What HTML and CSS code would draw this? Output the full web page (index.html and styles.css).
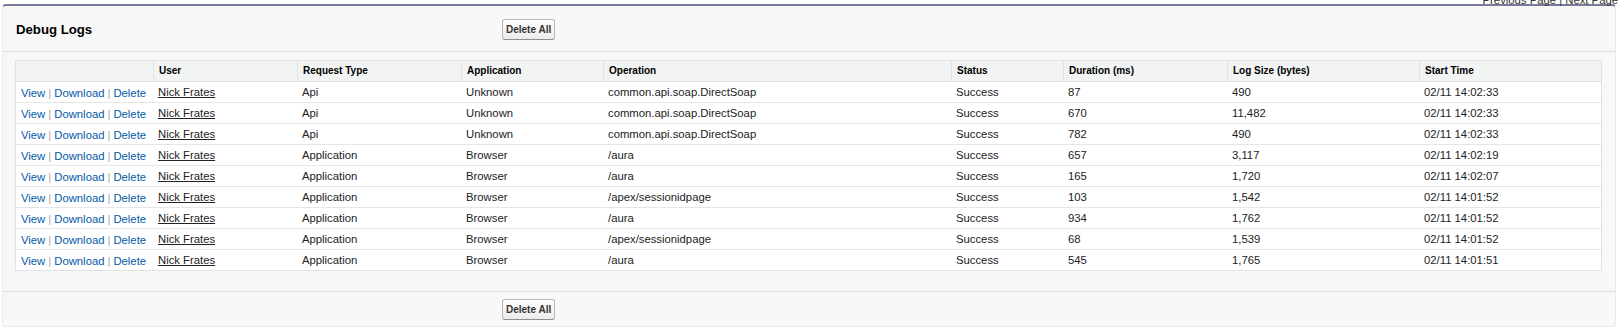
FILE: index.html
```html
<!DOCTYPE html>
<html lang="en">
<head>
    <meta charset="UTF-8">
    <title>Debug Logs</title>
    <link rel="stylesheet" href="styles.css">
</head>
<body>
    <div class="paging"><span>Previous Page | Next Page</span></div>
    <div class="block">
        <div class="block-header">
            <h2 class="block-title">Debug Logs</h2>
            <button class="btn">Delete All</button>
        </div>
        <div class="block-body">
            <table class="list">
                <colgroup>
                    <col style="width: 137px">
                    <col style="width: 144px">
                    <col style="width: 164px">
                    <col style="width: 142px">
                    <col style="width: 348px">
                    <col style="width: 112px">
                    <col style="width: 164px">
                    <col style="width: 192px">
                    <col>
                </colgroup>
                <thead>
                    <tr>
                        <th class="action-col"></th>
                        <th>User</th>
                        <th>Request Type</th>
                        <th>Application</th>
                        <th>Operation</th>
                        <th>Status</th>
                        <th>Duration (ms)</th>
                        <th>Log Size (bytes)</th>
                        <th>Start Time</th>
                    </tr>
                </thead>
                <tbody id="log-rows"></tbody>
            </table>
        </div>
        <div class="block-footer">
            <button class="btn">Delete All</button>
        </div>
    </div>

    <script>
        // rows as shown on the Debug Logs page
        const logs = [
            ['Api', 'Unknown', 'common.api.soap.DirectSoap', '87', '490', '02/11 14:02:33'],
            ['Api', 'Unknown', 'common.api.soap.DirectSoap', '670', '11,482', '02/11 14:02:33'],
            ['Api', 'Unknown', 'common.api.soap.DirectSoap', '782', '490', '02/11 14:02:33'],
            ['Application', 'Browser', '/aura', '657', '3,117', '02/11 14:02:19'],
            ['Application', 'Browser', '/aura', '165', '1,720', '02/11 14:02:07'],
            ['Application', 'Browser', '/apex/sessionidpage', '103', '1,542', '02/11 14:01:52'],
            ['Application', 'Browser', '/aura', '934', '1,762', '02/11 14:01:52'],
            ['Application', 'Browser', '/apex/sessionidpage', '68', '1,539', '02/11 14:01:52'],
            ['Application', 'Browser', '/aura', '545', '1,765', '02/11 14:01:51']
        ];

        const tbody = document.getElementById('log-rows');
        logs.forEach(log => {
            const row = document.createElement('tr');
            row.innerHTML = `
                <td class="action-col"><a href="#">View</a><span class="sep">|</span><a href="#">Download</a><span class="sep">|</span><a href="#">Delete</a></td>
                <td><a href="#" class="user-link">Nick Frates</a></td>
                <td>${log[0]}</td>
                <td>${log[1]}</td>
                <td>${log[2]}</td>
                <td>Success</td>
                <td>${log[3]}</td>
                <td>${log[4]}</td>
                <td>${log[5]}</td>`;
            tbody.appendChild(row);
        });
    </script>
</body>
</html>
```

FILE: styles.css
```css
body {
    margin: 0;
    font-family: 'Liberation Sans', Arial, sans-serif;
    font-size: 11.3px;
    color: #222;
    background-color: #fff;
}
.paging {
    height: 4px;
    margin-right: 3px;
    display: flex;
    justify-content: flex-end;
    align-items: flex-end;
    line-height: 8px;
    color: #333;
    white-space: nowrap;
}
.block {
    margin: 0 5px 0 2px;
    background-color: #f8f8f8;
    border: 1px solid #eaeaea;
    border-top: 2px solid #767b97;
    border-radius: 4px;
}
.block-header {
    display: flex;
    align-items: center;
    height: 43px;
    padding-top: 2px;
    border-bottom: 1px solid #dcdcdc;
}
.block-title {
    box-sizing: border-box;
    width: 499px;
    margin: 0;
    padding-left: 13px;
    font-size: 13.2px;
    font-weight: bold;
    color: #000;
}
.btn {
    height: 21px;
    padding: 0 3px;
    font-family: 'Liberation Sans', Arial, sans-serif;
    font-size: 10px;
    font-weight: bold;
    color: #333;
    background: linear-gradient(#fefefe, #ececec);
    border: 1px solid #b5b5b5;
    border-bottom-color: #8f8f8f;
    border-radius: 3px;
    cursor: pointer;
}
.block-body {
    padding: 8px 13px 20px 12px;
}
.block-footer {
    height: 34px;
    padding-left: 499px;
    display: flex;
    align-items: center;
    border-top: 1px solid #dcdcdc;
}
.list {
    width: 100%;
    table-layout: fixed;
    border-collapse: separate;
    border-spacing: 0;
    border: 1px solid #e0e3e5;
    background-color: #fff;
}
.list th,
.list td {
    padding: 0 5px;
    line-height: 20px;
    text-align: left;
    white-space: nowrap;
    overflow: hidden;
}
.list th {
    font-size: 10px;
    font-weight: bold;
    color: #000;
    background-color: #f2f3f3;
    border-bottom: 1px solid #e0e3e5;
    border-left: 1px solid #e0e3e5;
}
.list th:first-child {
    border-left: none;
}
.list td {
    border-bottom: 1px solid #e6e6e6;
}
.list tr:last-child td {
    border-bottom: none;
}
.list td.action-col {
    padding-top: 3px;
    line-height: 17px;
}
.list a {
    color: #015ba7;
    text-decoration: none;
}
.sep {
    margin: 0 3px;
    color: #a8a8a8;
}
.list a.user-link {
    color: #222;
    text-decoration: underline;
}
```
